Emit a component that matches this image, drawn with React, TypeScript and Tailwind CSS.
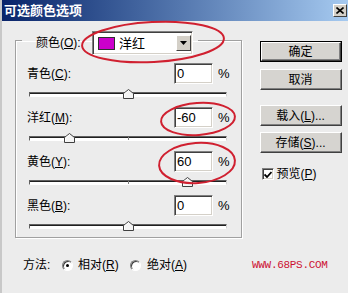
import React from "react";

const FONT = '"Liberation Sans", "Noto Sans CJK SC", sans-serif';

function Sunken({ className = "", children }: { className?: string; children?: React.ReactNode }) {
  return (
    <div
      className={`bg-white border border-t-[#808080] border-l-[#808080] border-r-white border-b-white shadow-[inset_1px_1px_0_#404040,inset_-1px_-1px_0_#d4d0c8] ${className}`}
    >
      {children}
    </div>
  );
}

function Button({ children, def = false, className = "" }: { children: React.ReactNode; def?: boolean; className?: string }) {
  const inner = (
    <div className="w-full h-full flex items-center justify-center bg-[#d6d4d0] border border-t-white border-l-white border-r-[#404040] border-b-[#404040] shadow-[inset_-1px_-1px_0_#808080] text-[12px] text-black leading-none">
      {children}
    </div>
  );
  if (def)
    return <div className={`w-[82px] h-[21px] border border-black ${className}`}>{inner}</div>;
  return <div className={`w-[82px] h-[21px] ${className}`}>{inner}</div>;
}

function Thumb({ pct }: { pct: number }) {
  return (
    <svg
      width="11"
      height="10"
      viewBox="0 0 11 10"
      className="absolute top-[-4px]"
      style={{ left: `calc(${pct}% - 5px)` }}
    >
      <path d="M0.5 9.5 V4.5 L5.5 0.5 L10.5 4.5 V9.5 Z" fill="#f4f4f4" stroke="#404040" strokeWidth="1" />
      <path d="M1.5 8.5 V5 L5.5 1.8" fill="none" stroke="#ffffff" strokeWidth="1" />
    </svg>
  );
}

function Row({ label, u, value, slider }: { label: string; u: string; value: string; slider: number }) {
  const pct = 50 + slider / 2;
  return (
    <div>
      <div className="flex items-center h-[21px]">
        <div className="w-[147px] text-[12px] leading-none">
          {label}(<u>{u}</u>):
        </div>
        <Sunken className="w-[39px] h-[21px] flex items-center pl-[2px] text-[13px] leading-none">{value}</Sunken>
        <div className="ml-[5px] text-[13px] leading-none">%</div>
      </div>
      <div className="h-[23px] pt-[8px] pl-[2px]">
        <div className="relative w-[198px] h-[5px] bg-white border border-t-[#606060] border-l-[#606060] border-r-[#d0d0d0] border-b-white shadow-[inset_0_1px_0_#202020]">
          {slider !== 0 && <div className="absolute left-[98px] top-0 w-[1px] h-full bg-[#808080]" />}
          <Thumb pct={pct} />
        </div>
      </div>
    </div>
  );
}

export default function App() {
  return (
    <div
      className="relative w-[348px] h-[293px] overflow-hidden bg-[#ececec] text-black border-l-2 border-l-[#c8c8c8]"
      style={{ fontFamily: FONT }}
    >
      {/* title bar */}
      <div className="h-[21px] flex items-center justify-between bg-gradient-to-r from-[#0a246a] to-[#a6caf0] pl-[2px] pr-[1px]">
        <span className="text-white font-bold text-[13px] leading-none">可选颜色选项</span>
        <div className="w-[14px] h-[13px] bg-[#d4d0c8] border border-t-white border-l-white border-r-[#404040] border-b-[#404040] flex items-center justify-center">
          <svg width="8" height="7" viewBox="0 0 8 7">
            <path d="M0.5 0.5 L7.5 6.5 M7.5 0.5 L0.5 6.5" stroke="#000" strokeWidth="1.6" />
          </svg>
        </div>
      </div>

      {/* body */}
      <div className="flex">
        <div className="pt-[10px] pl-[13px]">
          <fieldset className="w-[226px] h-[207px] border border-[#a0a0a0] shadow-[inset_1px_1px_0_#fff,1px_1px_0_#fff] pl-[11px] pr-[11px] pt-[14px]">
            <legend className="-ml-[5px] pl-[14px] pr-[5px]">
              <div className="flex items-center h-[24px] -mb-[6px]">
                <span className="w-[56px] text-[12px] leading-none">
                  颜色(<u>O</u>):
                </span>
                <Sunken className="w-[101px] h-[24px] flex items-center">
                  <div className="ml-[5px] w-[17px] h-[13px] bg-[#cc00cc] border border-[#303030]" />
                  <span className="ml-[4px] text-[13px] leading-none flex-1">洋红</span>
                  <div className="mr-[1px] w-[15px] h-[16px] bg-[#d4d0c8] border border-t-white border-l-white border-r-[#404040] border-b-[#404040] flex items-center justify-center">
                    <svg width="7" height="4" viewBox="0 0 7 4">
                      <path d="M0 0 H7 L3.5 4 Z" fill="#000" />
                    </svg>
                  </div>
                </Sunken>
              </div>
            </legend>
            <Row label="青色" u="C" value="0" slider={0} />
            <Row label="洋红" u="M" value="-60" slider={-60} />
            <Row label="黄色" u="Y" value="60" slider={60} />
            <Row label="黑色" u="B" value="0" slider={0} />
          </fieldset>
        </div>

        <div className="ml-[18px] pt-[20px] flex flex-col">
          <Button def>确定</Button>
          <Button className="mt-[7px]">取消</Button>
          <Button className="mt-[15px]">
            载入(<u>L</u>)...
          </Button>
          <Button className="mt-[6px]">
            存储(<u>S</u>)...
          </Button>
          <div className="mt-[15px] flex items-center ml-[2px]">
            <Sunken className="w-[12px] h-[12px] flex items-center justify-center">
              <svg width="8" height="7" viewBox="0 0 8 7">
                <path d="M0.5 3.5 L3 6 L7.5 1" stroke="#000" strokeWidth="1.8" fill="none" />
              </svg>
            </Sunken>
            <span className="ml-[3px] text-[12px] leading-none">
              预览(<u>P</u>)
            </span>
          </div>
        </div>
      </div>

      {/* bottom row */}
      <div className="mt-[19px] h-[16px] flex items-center pl-[21px] text-[12px] leading-none">
        <span className="w-[39px]">方法:</span>
        <div className="w-[11px] h-[11px] rounded-full bg-white border border-t-[#808080] border-l-[#808080] border-r-white border-b-white shadow-[inset_1px_1px_0_#404040] flex items-center justify-center">
          <div className="w-[3px] h-[3px] rounded-full bg-black" />
        </div>
        <span className="ml-[5px] w-[52px]">
          相对(<u>R</u>)
        </span>
        <div className="w-[11px] h-[11px] rounded-full bg-white border border-t-[#808080] border-l-[#808080] border-r-white border-b-white shadow-[inset_1px_1px_0_#404040]" />
        <span className="ml-[6px] w-[105px]">
          绝对(<u>A</u>)
        </span>
        <span className="text-[11px] text-[#cc1133] tracking-[-0.3px]" style={{ fontFamily: '"Liberation Mono", monospace' }}>
          WWW.68PS.COM
        </span>
      </div>

      {/* red annotation ellipses */}
      <svg className="absolute inset-0 pointer-events-none" width="348" height="293" viewBox="0 0 348 293">
        <ellipse cx="151" cy="42" rx="71" ry="20" transform="rotate(-3 151 42)" fill="none" stroke="#d02030" strokeWidth="2" />
        <ellipse cx="196" cy="119" rx="37" ry="16" transform="rotate(-4 196 119)" fill="none" stroke="#d02030" strokeWidth="2" />
        <ellipse cx="195" cy="163" rx="38" ry="20" transform="rotate(-4 195 163)" fill="none" stroke="#d02030" strokeWidth="2" />
      </svg>
    </div>
  );
}
